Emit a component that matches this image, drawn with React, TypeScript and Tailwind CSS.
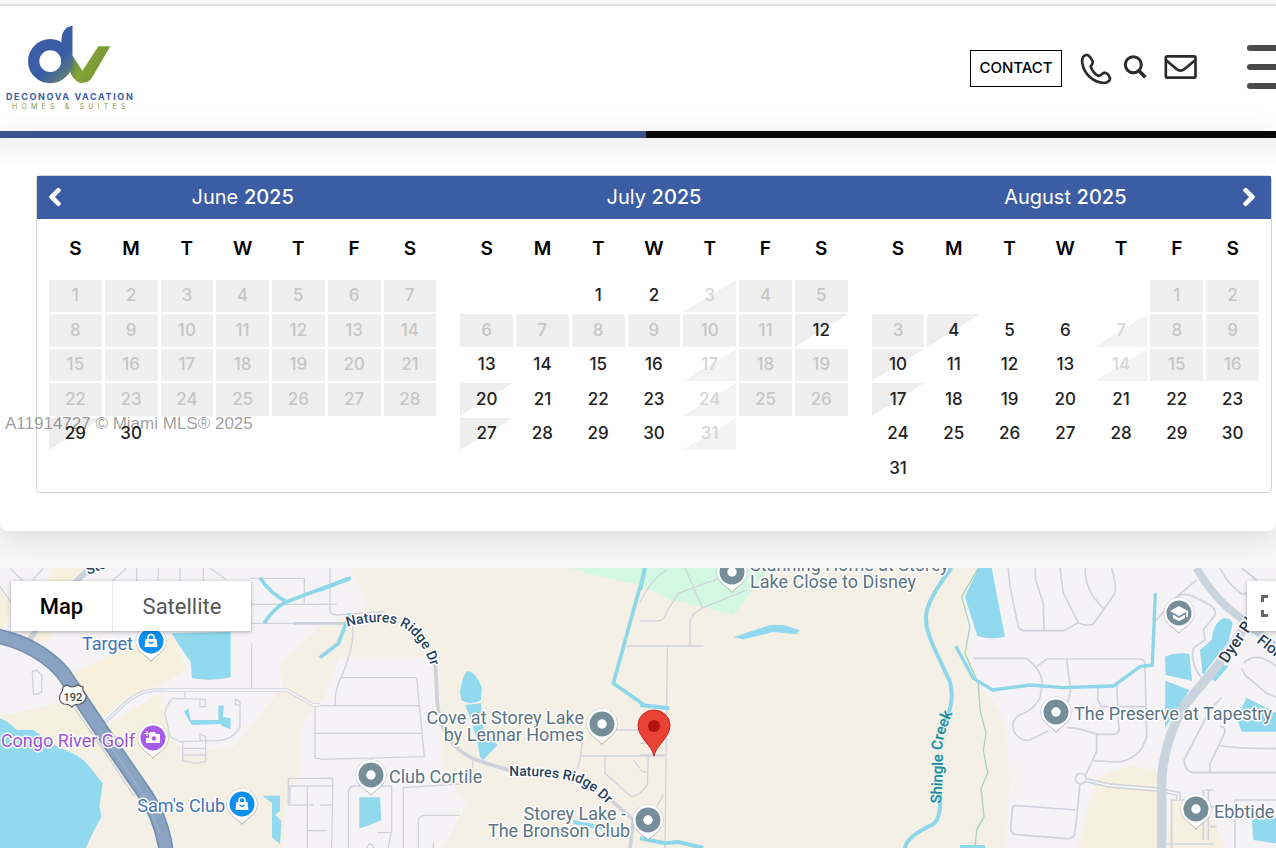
import { useState } from 'react';
import type { ReactNode } from 'react';
import { FaChevronLeft, FaChevronRight } from 'react-icons/fa';
import clsx from 'clsx';

type Status = 'free' | 'booked' | 'checkin' | 'checkout';

interface Month {
  name: string;
  year: number;
  offset: number;
  days: number;
  booked: number[];
  checkin: number[];
  checkout: number[];
}

const range = (from: number, to: number) => Array.from({ length: to - from + 1 }, (_, i) => from + i);

const months: Month[] = [
  { name: 'June', year: 2025, offset: 0, days: 30, booked: range(1, 28), checkin: [], checkout: [29] },
  {
    name: 'July',
    year: 2025,
    offset: 2,
    days: 31,
    booked: [...range(4, 11), 18, 19, 25, 26],
    checkin: [3, 17, 24, 31],
    checkout: [12, 20, 27],
  },
  {
    name: 'August',
    year: 2025,
    offset: 5,
    days: 31,
    booked: [1, 2, 3, 8, 9, 15, 16],
    checkin: [7, 14],
    checkout: [4, 10, 17],
  },
];

const weekdays = ['S', 'M', 'T', 'W', 'T', 'F', 'S'];

const dayStyles: Record<Status, string> = {
  free: 'text-[#222]',
  booked: 'bg-[#efefef] text-[#c6c6c6]',
  checkin: 'bg-[linear-gradient(to_bottom_right,transparent_50%,#f3f3f3_50%)] text-[#d6d6d6]',
  checkout: 'bg-[linear-gradient(to_bottom_right,#eeeeee_50%,transparent_50%)] text-[#222]',
};

function getStatus(month: Month, day: number): Status {
  if (month.booked.includes(day)) return 'booked';
  if (month.checkin.includes(day)) return 'checkin';
  if (month.checkout.includes(day)) return 'checkout';
  return 'free';
}

function getWeeks(month: Month) {
  const cells: (number | null)[] = [...Array(month.offset).fill(null), ...range(1, month.days)];
  while (cells.length % 7) cells.push(null);
  return range(0, cells.length / 7 - 1).map((w) => cells.slice(w * 7, w * 7 + 7));
}

function MonthTable({ month }: { month: Month }) {
  return (
    <div className="flex-1 px-[9px]">
      <table
        aria-label={`${month.name} ${month.year}`}
        className="w-full table-fixed border-separate border-spacing-x-[3px] border-spacing-y-[2px] text-center"
      >
        <thead>
          <tr>
            {weekdays.map((d, i) => (
              <th key={i} className="h-[57px] p-0 pb-[2px] text-[19px] leading-6 font-semibold text-black">{d}</th>
            ))}
          </tr>
        </thead>
        <tbody>
          {getWeeks(month).map((week, w) => (
            <tr key={w} className="h-8 even:h-[33px]">
              {week.map((day, i) => (
                <td
                  key={i}
                  className={clsx('p-0 pb-[2px] text-[17px] leading-5 font-medium', day && dayStyles[getStatus(month, day)])}
                >
                  {day}
                </td>
              ))}
            </tr>
          ))}
        </tbody>
      </table>
    </div>
  );
}

function Logo() {
  return (
    <a href="#" className="flex flex-col pl-[6px]">
      <svg viewBox="84 76 250 178" className="ml-[22px] h-[59px] w-[83px]" aria-hidden="true">
        <defs>
          <linearGradient id="logoD" x1="84" y1="76" x2="240" y2="254" gradientUnits="userSpaceOnUse">
            <stop offset="0.6" stopColor="#3b5da6" />
            <stop offset="1" stopColor="#7c9a50" />
          </linearGradient>
          <linearGradient id="logoV" x1="205" y1="160" x2="300" y2="200" gradientUnits="userSpaceOnUse">
            <stop offset="0" stopColor="#3f6a6b" />
            <stop offset="0.5" stopColor="#86a637" />
            <stop offset="1" stopColor="#789936" />
          </linearGradient>
        </defs>
        <path d="M216 166L248 214L296 140H332L278 233Q267 251 247 251Q228 250 214 225L205 200Z" fill="url(#logoV)" />
        <circle cx="151" cy="185" r="50" fill="none" stroke="url(#logoD)" strokeWidth="34" />
        <path d="M218 78Q185 84 185 118V226L200 230L218 208Z" fill="url(#logoD)" />
      </svg>
      <span className="mt-2 text-[9px] leading-[10px] font-bold tracking-[0.18em] text-[#3b5da6]">DECONOVA VACATION</span>
      <span className="pl-[6px] text-[7px] leading-[10px] tracking-[0.6em] text-[#8b9a3e]">HOMES &amp; SUITES</span>
    </a>
  );
}

function Header() {
  return (
    <header className="overflow-hidden border-t-2 border-[#e0e0e0] bg-white">
      <div className="flex h-[125px] items-center">
        <Logo />
        <div className="ml-auto flex items-center">
          <a href="#contact" className="flex h-[37px] w-[92px] items-center justify-center border border-black text-[15px] font-medium text-black">
            CONTACT
          </a>
          <a href="#phone" aria-label="Call us" className="ml-[18px]">
            <svg viewBox="420 159 96 96" className="size-8" fill="none" stroke="#2b2b2b" strokeWidth="8" strokeLinejoin="round">
              <path d="M438 165C428 168 425 178 427 190C432 223 460 247 492 249C503 248 511 242 510 234C507 226 500 218 492 218C486 220 482 227 477 228C465 223 456 212 452 199C455 194 461 190 457 182C452 173 446 163 438 165Z" />
            </svg>
          </a>
          <div className="mb-1 flex items-center">
            <button type="button" aria-label="Search" className="ml-[11px]">
              <svg viewBox="549 162 72 76" className="h-[26px] w-6" fill="none" stroke="#2b2b2b">
                <circle cx="580" cy="193" r="24" strokeWidth="9" />
                <path d="M597 211L616 231" strokeWidth="11" />
              </svg>
            </button>
            <a href="#email" aria-label="Email us" className="ml-[17px]">
              <svg viewBox="674 164 98 72" className="h-6 w-[33px]" fill="none" stroke="#2b2b2b" strokeWidth="8">
                <rect x="679" y="168" width="89" height="64" rx="4" />
                <path d="M680 180L711 206Q723 216 735 206L767 180" />
              </svg>
            </a>
            <button type="button" aria-label="Menu" className="-mr-[19px] ml-[50px] flex w-12 flex-col gap-[13px]">
              <span className="h-[6px] rounded-full bg-[#4a4a4a]" />
              <span className="h-[6px] rounded-full bg-[#4a4a4a]" />
              <span className="h-[6px] rounded-full bg-[#4a4a4a]" />
            </button>
          </div>
        </div>
      </div>
      <div className="flex h-[7px] bg-[#0a0a0a]">
        <div className="w-[646px] bg-[#3a5894]" />
      </div>
    </header>
  );
}

function Pin({ x, y, color = '#758e9a', children }: { x: number; y: number; color?: string; children?: ReactNode }) {
  return (
    <g transform={`translate(${x} ${y})`}>
      <path d="M0 21C-3 17 -7 15 -11 11A15.500 15.500 0 1 1 11 11C7 15 3 17 0 21Z" fill="#8a8a8a" opacity="0.5" />
      <path d="M0 19.500C-3 16 -7 14 -10.500 10.500A15 15 0 1 1 10.500 10.500C7 14 3 16 0 19.500Z" fill="#fff" />
      <circle r="12.500" fill={color} />
      {children ?? <circle r="4.700" fill="#fff" />}
    </g>
  );
}

function Bag() {
  return (
    <>
      <path d="M-5.500 -2H5.500L6.500 6H-6.500Z" fill="#fff" />
      <path d="M-3 -2V-3.500A3 3 0 0 1 3 -3.500V-2" fill="none" stroke="#fff" strokeWidth="1.600" />
      <path d="M-2.500 1Q0 3.500 2.500 1" fill="none" stroke="#0d8ff0" strokeWidth="1.300" />
    </>
  );
}

function Terrain() {
  return (
    <g transform="scale(0.33333)">
      {/* west */}
      <g transform="translate(0 -84)">
        <path d="M0 84H1050L1105 200L960 260L840 370L850 440L700 620L560 640L480 560L420 600L300 620L0 560Z" fill="#f5f3f5" />
        <path d="M215 400L390 320L520 290L560 390L470 440L380 470L290 550L230 480Z" fill="#f7f0dd" />
        <path d="M160 84H250L190 150L150 300L60 310L110 210ZM0 150L35 200L0 290Z" fill="#f7f0dd" />
        <path d="M0 530L240 470L310 560L480 460L510 600L300 640L0 600Z" fill="#f6f0e1" />
        <path d="M900 580Q930 500 970 480L1020 350H1290L1320 580L1330 700L1400 790L1330 924H850L860 780L900 700Z" fill="#f5f3f5" />
        <path d="M0 535Q30 548 50 570L100 570Q140 600 180 625Q230 640 260 670L308 730L298 800L305 830Q280 870 258 924H0Z" fill="#90d9ee" />
        <path d="M515 280L540 320L572 365L576 415Q640 425 692 412V275ZM552 515L565 505L572 540L655 540V497H672L668 530L692 535V567L670 560L660 552L575 555ZM788 767H840V812L826 824L844 844L840 912L816 892V790Z" fill="#90d9ee" />
        <g fill="none" stroke="#d0d3dc" strokeWidth="4">
          <path d="M30 84L75 130M130 84L90 130M410 84V130M475 84V130M540 84V130M610 84V130M330 130L380 84M630 84L680 120M750 115H913V190M750 193H1010M750 250H990M755 310V450M0 140L50 210" />
          <path d="M97 395L110 390L125 405V455L115 462H100ZM520 475Q500 490 495 520L510 590L540 605L650 602Q700 600 720 560V485L706 478V495H720M600 475V500H616V478L520 475M600 603V582L617 590V665L585 670L548 662V605M548 625H618M548 645H618M555 450V475" />
          <path d="M220 500L310 630L400 765L425 760M945 500V655H960M865 715V795H940M865 715H1000M865 738H1000M922 738V924M922 872H980M870 740V790M945 580H960" />
        </g>
        <g fill="none">
          <path d="M300 560L370 495Q410 455 460 450H860L940 495H960" stroke="#ced2db" strokeWidth="10" />
          <path d="M300 560L370 495Q410 455 460 450H600" stroke="#f0f1f4" strokeWidth="5" />
          <path d="M500 450H860L940 495H960" stroke="#f5f3f5" strokeWidth="6" />
          <path d="M80 315L150 200L270 84" stroke="#c8d2dd" strokeWidth="18" />
          <path d="M-20 286Q110 310 190 400L330 610L430 755Q490 840 502 960" stroke="#738fb3" strokeWidth="46" />
          <path d="M-20 286Q110 310 190 400L330 610L430 755Q490 840 502 960" stroke="#8ba3c2" strokeWidth="36" />
          <path d="M300 570L440 780L480 880" stroke="#9db1cb" strokeWidth="4" />
          <path d="M780 113Q810 160 860 185L960 148L1050 114M860 185Q820 205 792 250" stroke="#8ed6ea" strokeWidth="11" />
        </g>
      </g>
      {/* middle west */}
      <g transform="translate(960 -24)">
        <path d="M750 24H1350L1240 165Q1150 140 1050 120L960 75Q850 55 750 24Z" fill="#d3f8e2" />
        <path d="M420 395Q430 335 445 333Q465 335 485 380L483 420Q450 440 425 420ZM436 435L483 430L490 510Q520 540 533 555L490 600L480 590Q470 520 436 435ZM118 712H180L184 780L150 795L118 805ZM760 780L880 803L870 815L760 792Z" fill="#90d9ee" />
        <g fill="none" stroke="#d0d3dc" strokeWidth="4">
          <path d="M30 24V150Q30 163 50 165L190 155M0 133H30M65 353H290L313 590L0 598M0 437H300M0 520H308" />
          <path d="M98 200Q105 250 65 350Q45 380 45 437M0 655H38V700L35 864M0 735H38M85 864V700Q85 678 105 678H215V810L205 864M172 818H215M250 864V683L450 670M295 864V785Q295 768 315 766H420M140 864Q150 840 162 864M340 864V850" />
          <path d="M885 510H960M780 588H1030M790 520L780 600L770 630M855 590V640L935 710L960 700M940 600L960 625M920 258H1150M458 600V640" />
        </g>
        <path d="M345 285L352 430Q365 560 470 600L570 632M855 705L940 780L930 864" fill="none" stroke="#cdd2db" strokeWidth="11" />
        <path d="M-80 190H80" stroke="#cdd2db" strokeWidth="8" />
        <path d="M90 160L55 250L0 293M960 80L880 370L980 440" fill="none" stroke="#8ed6ea" strokeWidth="11" />
        <path d="M0 90L92 55" stroke="#8ed6ea" strokeWidth="11" />
      </g>
      {/* middle */}
      <g transform="translate(1920 -24)">
        <path d="M280 232L390 195H430L478 210L470 223L400 216L310 238Z" fill="#90d9ee" />
        <g fill="none" stroke="#d0d3dc" strokeWidth="4">
          <path d="M0 183H55Q75 180 80 155L115 100L250 50M0 130Q30 60 80 30M135 24L188 145M150 255V185Q155 160 190 143L320 90M82 262L75 864M0 585H75M25 590L22 675L0 700M0 550H60M0 630L20 638M70 705L50 740" />
        </g>
        <path d="M15 24L0 90M0 435L88 445M0 835L75 850L115 846L190 864M935 24Q860 120 858 170Q855 210 890 280L930 365Q945 430 915 480M900 700Q905 780 875 795Q800 830 795 864" fill="none" stroke="#8ed6ea" strokeWidth="12" />
      </g>
      {/* east */}
      <g transform="translate(2760 -24)">
        <path d="M175 24H1080V864H480L520 680L600 610L700 640L715 864H255Q275 700 260 520Q240 430 180 380L150 300L130 120Z" fill="#f5f3f5" />
        <path d="M475 864Q500 740 530 660Q620 590 715 640V864ZM755 710H850L915 864H740Z" fill="#f6f0e1" />
        <path d="M175 24H215L255 230Q210 240 172 228L135 110ZM735 290Q770 275 808 282L816 362L737 345ZM736 362L808 390L735 505ZM910 175Q935 172 938 192L925 245L855 335L848 345L840 270L875 240Q880 190 910 175ZM980 413L1070 460V515H965L950 475ZM995 770H1070V850L1000 840Z" fill="#90d9ee" />
        <path d="M120 855H195V864H120ZM900 310L925 320L885 365L870 350Z" fill="#90d9ee" />
        <path d="M175 24L125 110L150 200L135 280L175 370L180 450L198 520L190 570L203 640L183 685L192 770L170 810L165 864" fill="none" stroke="#a5d6bb" strokeWidth="4" />
        <g fill="none" stroke="#d0d3dc" strokeWidth="5">
          <path d="M265 24L270 80L295 200Q300 212 315 212H430L475 188Q500 200 520 192L585 100Q590 80 575 24M345 24L347 60L370 130L372 212M420 24L430 100L475 188M497 24Q490 60 520 110L552 148" />
          <path d="M160 295H320Q365 330 367 370L360 415Q340 450 300 465Q270 480 282 515Q300 545 330 540L385 512M350 320L380 297H660Q675 298 675 315L680 530Q660 600 590 606L522 602M440 297L452 390L440 440M535 382L533 420L545 440H680M560 375H590L597 510Q595 523 580 523H530Q470 500 440 503M530 525V575L497 645M480 672L465 820Q460 838 440 836L290 824Q272 822 272 805L278 740Q282 736 290 737L468 750" />
          <path d="M705 185L770 110L830 60M770 110Q800 95 830 115L870 135Q890 150 885 165L850 210L855 240L820 265Q810 310 845 355M900 24Q920 70 965 102L980 100M965 24L1010 60M970 310Q1010 270 1070 320M965 325L975 345L1040 400L1070 412M905 413L870 450L792 600Q795 635 820 638H1070M900 500Q920 500 913 520L895 560L870 610V640M895 555Q920 565 1070 566M945 864V720H1070M755 864V720H800M880 690H855M850 690V840M865 690V840M740 852H880M870 740H890M870 800H890" />
        </g>
        <circle cx="482" cy="656" r="16" fill="#f5f3f5" stroke="#d0d3dc" strokeWidth="5" />
        <path d="M497 660L570 677L710 688L775 702V720" fill="none" stroke="#ced2db" strokeWidth="14" />
        <path d="M497 660L570 677L710 688L775 702V720" fill="none" stroke="#f5f3f5" strokeWidth="5" />
        <path d="M830 24Q865 90 925 145L975 185L1080 270" fill="none" stroke="#c9d4de" strokeWidth="24" />
        <path d="M725 864V660Q730 550 790 440L890 320L990 180" fill="none" stroke="#c9d4de" strokeWidth="28" />
        <path d="M107 258L160 355L218 390L330 375L430 383L580 378L660 320L697 315L706 100" fill="none" stroke="#8ed6ea" strokeWidth="10" />
        <path d="M852 300V340" fill="none" stroke="#8ed6ea" strokeWidth="8" />
      </g>
    </g>
  );
}

function MapCanvas() {
  return (
    <svg
      viewBox="0 0 1276 280"
      preserveAspectRatio="xMidYMid slice"
      className="h-[280px] w-full bg-[#f4f0e5] font-[Roboto,sans-serif]"
      role="img"
      aria-label="Property location"
    >
      <defs>
        <path id="ridgeNorth" d="M347 59Q385 48 406 61Q424 74 432 102" />
        <path id="ridgeSouth" d="M509 208Q550 207 576 214Q596 222 620 250" />
        <path id="creek" d="M941 236Q944 190 942 185Q942 165 956 138" />
        <path id="dyer" d="M1227 96L1280 18" />
      </defs>
      <Terrain />

      <g stroke="#fff" strokeWidth="3" strokeLinejoin="round" paintOrder="stroke" fontSize="18">
        <g fill="#3f75b8">
          <text x="133" y="82" textAnchor="end">Target</text>
          <text x="225" y="244" textAnchor="end">Sam's Club</text>
        </g>
        <text x="135" y="179" textAnchor="end" fill="#9854d4">Congo River Golf</text>
        <g fill="#5c7382">
          <text x="584" y="156" textAnchor="end">Cove at Storey Lake</text>
          <text x="584" y="173" textAnchor="end">by Lennar Homes</text>
          <text x="389" y="215">Club Cortile</text>
          <text x="626" y="252" textAnchor="end">Storey Lake -</text>
          <text x="630" y="269" textAnchor="end">The Bronson Club</text>
          <text x="750" y="3">Stunning Home at Storey</text>
          <text x="750" y="20">Lake Close to Disney</text>
          <text x="1074" y="152">The Preserve at Tapestry</text>
          <text x="1214" y="250">Ebbtide</text>
        </g>
        <g fill="#263f5e" fontSize="14" fontWeight="500">
          <text><textPath href="#ridgeNorth">Natures Ridge Dr</textPath></text>
          <text><textPath href="#ridgeSouth">Natures Ridge Dr</textPath></text>
          <text fontSize="16" fill="#2c3e50"><textPath href="#dyer">Dyer Blvd</textPath></text>
          <text fontSize="15" transform="translate(1256 74) rotate(38)">Flor</text>
          <text transform="translate(88 7) rotate(-22)">Sto</text>
        </g>
        <text fontSize="15" fontWeight="500" fill="#1f8a99" stroke="#c4edf6" strokeWidth="1">
          <textPath href="#creek">Shingle Creek</textPath>
        </text>
      </g>

      {/* US route shield */}
      <path d="M63 119L67 117Q72 121 77 117L83 119Q82 123 86 127Q87 134 80 136Q74 136 72 139Q69 136 64 136Q58 134 60 127Q63 123 63 119Z" fill="#fff" stroke="#555" strokeWidth="1.200" />
      <text x="73" y="133" textAnchor="middle" fontSize="11" fontWeight="500" fill="#444">192</text>

      <Pin x={151} y={73} color="#0d8ff0"><Bag /></Pin>
      <Pin x={242} y={236} color="#0d8ff0"><Bag /></Pin>
      <Pin x={153} y={170} color="#a65ce6">
        <path d="M-4 -4L-3 -6H2L3 -4H7V5H-7V0H-4Z" fill="#fff" />
        <path d="M-6 -7V-2M-8.500 -4.500H-3.500" stroke="#fff" strokeWidth="1.200" />
        <circle cx="1" cy="0.500" r="2.200" fill="#a65ce6" />
      </Pin>
      <Pin x={602} y={156} />
      <Pin x={371} y={207} />
      <Pin x={648} y={252} />
      <Pin x={732} y={4} />
      <Pin x={1179} y={45}>
        <path d="M0 -7L-9 -2L0 3L7 -1V4H9V-2Z" fill="#fff" />
        <path d="M-6 1.500V5L0 8L6 5V1.500L0 5Z" fill="#fff" />
      </Pin>
      <Pin x={1056} y={144} />
      <Pin x={1196} y={241} />

      <path d="M654 188C652 177 638 170 638 157A16 15 0 0 1 670 157C670 170 656 177 654 188Z" fill="#ea4335" stroke="#c5221f" />
      <circle cx="654" cy="158" r="6" fill="#b31412" />
    </svg>
  );
}

export default function App() {
  const [mapType, setMapType] = useState<'map' | 'satellite'>('map');

  return (
    <div className="overflow-x-hidden bg-[#f8f8f8] pt-1 font-[Inter,sans-serif]">
      <Header />

      <main>
        <section className="relative rounded-b-lg bg-white bg-[linear-gradient(#f1f1f1,#ffffff_28px)] pt-[37px] pr-1 pb-[38px] pl-9 shadow-[0_4px_36px_rgba(0,0,0,0.14)]">
          <div className="rounded border border-[#d6d6d6] bg-white pb-[5px]">
            <div className="flex h-[43px] items-center bg-[#3c5da3] pb-[2px] text-xl text-white">
              {months.map((m, i) => (
                <div key={m.name} className="relative flex-1 text-center">
                  {i === 0 && (
                    <button type="button" aria-label="Previous month" className="absolute top-1 left-2">
                      <FaChevronLeft className="stroke-current stroke-[36px]" />
                    </button>
                  )}
                  <h2>
                    {m.name} <span className="font-medium">{m.year}</span>
                  </h2>
                  {i === months.length - 1 && (
                    <button type="button" aria-label="Next month" className="absolute top-1 right-3">
                      <FaChevronRight className="stroke-current stroke-[36px]" />
                    </button>
                  )}
                </div>
              ))}
            </div>
            <div className="flex">
              {months.map((m) => (
                <MonthTable key={m.name} month={m} />
              ))}
            </div>
          </div>
          <p className="absolute bottom-[95px] left-[5px] font-['Liberation_Sans',sans-serif] text-[17px] leading-6 text-black/40">
            A11914727 © Miami MLS® 2025
          </p>
        </section>

        <section className="relative mt-[37px]">
          <MapCanvas />
          <div className="absolute top-[13px] left-[11px] flex bg-white font-[Roboto,sans-serif] text-[22px] shadow-[0_1px_4px_rgba(0,0,0,0.3)]">
            <button
              type="button"
              onClick={() => setMapType('map')}
              className={clsx('h-[50px] w-[102px] border-r border-[#e6e6e6]', mapType === 'map' ? 'font-medium text-black' : 'text-[#565656]')}
            >
              Map
            </button>
            <button
              type="button"
              onClick={() => setMapType('satellite')}
              className={clsx('h-[50px] w-[138px]', mapType === 'satellite' ? 'font-medium text-black' : 'text-[#565656]')}
            >
              Satellite
            </button>
          </div>
          <button
            type="button"
            aria-label="Toggle fullscreen"
            className="absolute top-[13px] -right-[21px] flex size-[50px] items-center justify-center rounded-xs bg-white shadow-[0_1px_4px_rgba(0,0,0,0.3)]"
          >
            <svg viewBox="0 0 24 24" className="size-6" fill="none" stroke="#666" strokeWidth="3">
              <path d="M2.500 8V2.500H8M16 2.500H21.500V8M21.500 16V21.500H16M8 21.500H2.500V16" />
            </svg>
          </button>
        </section>
      </main>
    </div>
  );
}
